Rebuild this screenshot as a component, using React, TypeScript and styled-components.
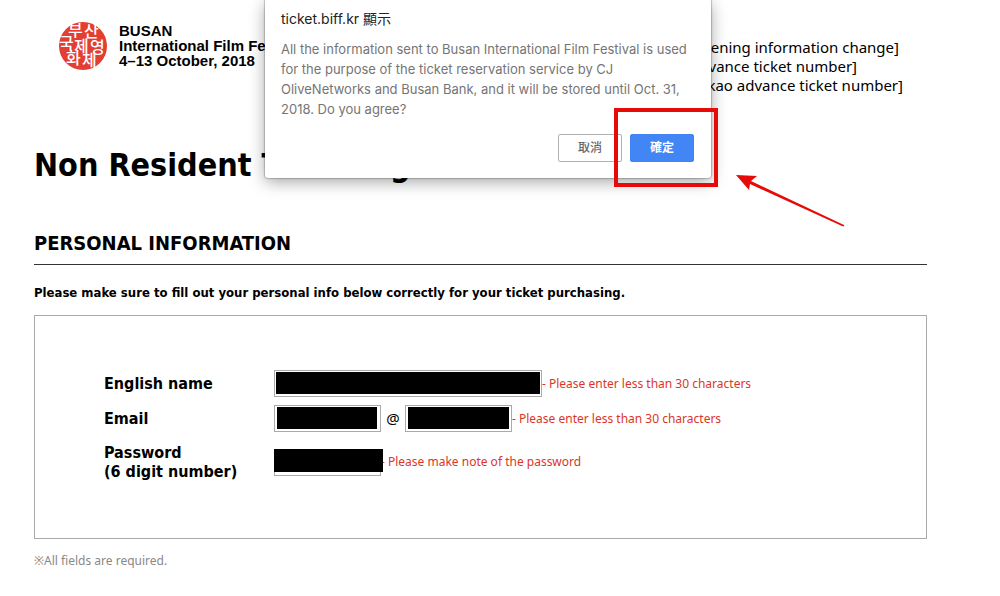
import React from "react";
import styled, { createGlobalStyle } from "styled-components";

const headingFont = `"DejaVu Sans Condensed", "Noto Sans", sans-serif`;
const textFont = `"Noto Sans", "Noto Sans CJK TC", sans-serif`;
const dialogFont = `Inter, "Noto Sans CJK TC", sans-serif`;

const GlobalStyle = createGlobalStyle`
  * { box-sizing: border-box; }
  body { margin: 0; background: #fff; color: #000; font-family: ${headingFont}; }
`;

const Page = styled.div`
  position: relative;
  padding: 22px 73px 24px 34px;
`;

const Header = styled.header`
  display: flex;
  justify-content: space-between;
  align-items: flex-start;
`;

const Brand = styled.a`
  display: flex;
  gap: 12px;
  padding-left: 25px;
  color: #000;
  text-decoration: none;
`;

const BrandText = styled.span`
  padding-top: 1px;
  font: bold 15px/15px "Liberation Sans", sans-serif;
  white-space: nowrap;
`;

const Notices = styled.ul`
  margin: 0;
  padding: 16px 24px 0 0;
  list-style: none;
  font-family: ${textFont};
  font-size: 15px;
  line-height: 19px;
  white-space: nowrap;
`;

const Title = styled.h1`
  margin: 50px 0 0;
  font-size: 32px;
  line-height: 40px;
`;

const SectionTitle = styled.h2`
  margin: 46px 0 0;
  padding-bottom: 9px;
  border-bottom: 1px solid #333;
  font-size: 20px;
  line-height: 24px;
`;

const Intro = styled.p`
  margin: 18px 0 12px;
  font-size: 13px;
  font-weight: bold;
  line-height: 20px;
`;

const Form = styled.form`
  padding: 50px 69px;
  border: 1px solid #aaa;
`;

const Row = styled.div`
  display: grid;
  grid-template-columns: 170px 1fr;
  align-items: center;
  min-height: 35px;
`;

const Label = styled.label`
  padding: 7px 0;
  font-size: 16px;
  font-weight: bold;
  line-height: 19px;
`;

const Controls = styled.div`
  display: flex;
  align-items: center;
`;

const Field = styled.span<{ $width: number }>`
  position: relative;
  display: block;
  width: ${(p) => p.$width}px;
  height: 27px;
`;

const Input = styled.input`
  display: block;
  width: 100%;
  height: 100%;
  padding: 2px 4px;
  border: 1px solid #aaa;
  font: 16px ${textFont};
`;

const Redaction = styled.span<{ $inset: string }>`
  position: absolute;
  inset: ${(p) => p.$inset};
  background: #000;
`;

const At = styled.span`
  width: 24px;
  font-family: ${textFont};
  font-size: 15px;
  line-height: 19px;
  text-align: center;
`;

const Hint = styled.span`
  font-family: ${textFont};
  font-size: 12px;
  line-height: 20px;
  color: #dc3527;
  white-space: pre;
`;

const Footnote = styled.p`
  margin: 12px 0 0;
  font-family: ${textFont};
  font-size: 12px;
  line-height: 20px;
  color: #888;
`;

const Overlay = styled.div`
  position: absolute;
  top: 0;
  left: 0;
  right: 0;
  display: flex;
  justify-content: center;
  padding-right: 24px;
`;

const Dialog = styled.div`
  position: relative;
  width: 446px;
  padding: 9px 17px 16px 16px;
  border-radius: 0 0 3px 3px;
  background: #fff;
  box-shadow: 0 0 1px 1px rgba(0, 0, 0, 0.2), 0 4px 16px rgba(0, 0, 0, 0.35);
  font-family: ${dialogFont};
`;

const DialogTitle = styled.h2`
  margin: 0;
  font-size: 14px;
  font-weight: normal;
  line-height: 20px;
  color: #222;
`;

const DialogText = styled.p`
  margin: 10px 0 15px;
  font-size: 13px;
  line-height: 20px;
  color: #757575;
`;

const Actions = styled.div`
  display: flex;
  justify-content: flex-end;
  gap: 8px;
`;

const Button = styled.button<{ $primary?: boolean }>`
  width: 64px;
  height: 28px;
  padding: 0;
  border: 1px solid ${(p) => (p.$primary ? "#4285f4" : "#b0b0b0")};
  border-radius: 2px;
  background: ${(p) => (p.$primary ? "#4285f4" : "#fff")};
  color: ${(p) => (p.$primary ? "#fff" : "#666")};
  font: ${(p) => (p.$primary ? "bold" : "500")} 12px/20px ${dialogFont};
`;

const Marked = styled.span`
  position: relative;
  display: flex;

  &::after {
    content: "";
    position: absolute;
    inset: -26px -24px -25px -16px;
    border: 4px solid #e60b09;
    pointer-events: none;
  }
`;

const Arrow = styled.svg`
  position: absolute;
  top: 172px;
  left: 470px;
  pointer-events: none;
`;

function Seal() {
  return (
    <svg width="48" height="48" viewBox="0 0 48 48" overflow="visible" aria-hidden="true">
      <circle cx="24" cy="24" r="24" fill="#e23e32" />
      <g fill="#fff" fontFamily='"Noto Sans CJK KR", sans-serif' fontSize="16" fontWeight="500">
        <text x="9 25" y="14 15">
          부산
        </text>
        <text x="0 15 31" y="27 30 31">
          국제영
        </text>
        <text x="7 23" y="42 44">
          화제
        </text>
      </g>
    </svg>
  );
}

export default function App() {
  return (
    <>
      <GlobalStyle />
      <Page>
        <Header>
          <Brand href="#">
            <Seal />
            <BrandText>
              BUSAN
              <br />
              International Film Festival
              <br />
              4–13 October, 2018
            </BrandText>
          </Brand>
          <Notices>
            <li>[Opening information change]</li>
            <li>[Advance ticket number]</li>
            <li>[Kakao advance ticket number]</li>
          </Notices>
        </Header>
        <main>
          <Title>Non Resident Ticketing</Title>
          <SectionTitle>PERSONAL INFORMATION</SectionTitle>
          <Intro>
            Please make sure to fill out your personal info below correctly for your ticket
            purchasing.
          </Intro>
          <Form>
            <Row>
              <Label htmlFor="name">English name</Label>
              <Controls>
                <Field $width={268}>
                  <Input id="name" type="text" />
                  <Redaction $inset="2px 2px 3px" />
                </Field>
                <Hint>- Please enter less than 30 characters</Hint>
              </Controls>
            </Row>
            <Row>
              <Label htmlFor="email">Email</Label>
              <Controls>
                <Field $width={107}>
                  <Input id="email" type="text" />
                  <Redaction $inset="2px 4px 3px 3px" />
                </Field>
                <At>@</At>
                <Field $width={107}>
                  <Input type="text" aria-label="Email domain" />
                  <Redaction $inset="2px 3px 3px" />
                </Field>
                <Hint>- Please enter less than 30 characters</Hint>
              </Controls>
            </Row>
            <Row>
              <Label htmlFor="password">
                Password
                <br />
                (6 digit number)
              </Label>
              <Controls>
                <Field $width={107}>
                  <Input id="password" type="password" />
                  <Redaction $inset="0 -2px 4px 0" />
                </Field>
                <Hint>- Please make note of the password</Hint>
              </Controls>
            </Row>
          </Form>
          <Footnote>※All fields are required.</Footnote>
        </main>
        <Overlay>
          <Dialog role="dialog" aria-labelledby="dialog-title">
            <DialogTitle id="dialog-title">ticket.biff.kr 顯示</DialogTitle>
            <DialogText>
              All the information sent to Busan International Film Festival is used for the purpose
              of the ticket reservation service by CJ OliveNetworks and Busan Bank, and it will be
              stored until Oct. 31, 2018. Do you agree?
            </DialogText>
            <Actions>
              <Button type="button">取消</Button>
              <Marked>
                <Button type="button" $primary>
                  確定
                </Button>
              </Marked>
            </Actions>
            <Arrow width="112" height="58" viewBox="0 0 112 58" aria-hidden="true">
              <path
                d="M1 3 L22 4 L16 9 L109 53 Q110 55 107 54 L15 12 L14 18 Z"
                fill="#e60b09"
              />
            </Arrow>
          </Dialog>
        </Overlay>
      </Page>
    </>
  );
}
